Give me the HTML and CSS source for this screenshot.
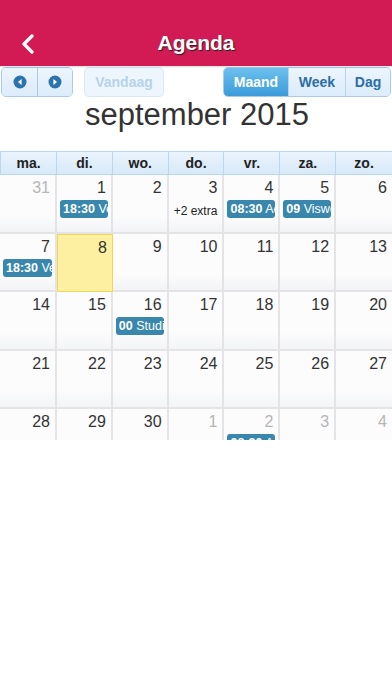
FILE: index.html
```html
<!DOCTYPE html>
<html lang="nl">
<head>
    <meta charset="UTF-8">
    <title>Agenda</title>
    <link rel="stylesheet" href="styles.css">
</head>
<body>
    <div class="app-header">
        <a class="back-btn" href="#">
            <svg width="14" height="20" viewBox="0 0 14 20"><path d="M11 2 L3 10 L11 18" fill="none" stroke="#fff" stroke-width="3.2" stroke-linecap="round" stroke-linejoin="round"/></svg>
        </a>
        <div class="app-title">Agenda</div>
    </div>

    <div class="cal-toolbar">
        <div class="btn-group">
            <span class="cal-btn arrow-btn">
                <svg width="14" height="14" viewBox="0 0 14 14"><circle cx="7" cy="7" r="6.5" fill="#2b74ad"/><path d="M8.6 4 L5 7 L8.6 10 Z" fill="#fff"/></svg>
            </span>
            <span class="cal-btn arrow-btn">
                <svg width="14" height="14" viewBox="0 0 14 14"><circle cx="7" cy="7" r="6.5" fill="#2b74ad"/><path d="M5.4 4 L9 7 L5.4 10 Z" fill="#fff"/></svg>
            </span>
        </div>
        <span class="cal-btn today-btn">Vandaag</span>
        <div class="toolbar-spacer"></div>
        <div class="btn-group">
            <span class="cal-btn view-btn active">Maand</span>
            <span class="cal-btn view-btn">Week</span>
            <span class="cal-btn view-btn">Dag</span>
        </div>
    </div>

    <h2 class="cal-title">september 2015</h2>

    <div class="cal-grid">
        <div class="cal-head">ma.</div>
        <div class="cal-head">di.</div>
        <div class="cal-head">wo.</div>
        <div class="cal-head">do.</div>
        <div class="cal-head">vr.</div>
        <div class="cal-head">za.</div>
        <div class="cal-head">zo.</div>

        <div class="cal-day other"><div class="day-num">31</div></div>
        <div class="cal-day"><div class="day-num">1</div><div class="cal-event"><b>18:30</b> Vergadering</div></div>
        <div class="cal-day"><div class="day-num">2</div></div>
        <div class="cal-day"><div class="day-num">3</div><div class="more-link">+2 extra</div></div>
        <div class="cal-day"><div class="day-num">4</div><div class="cal-event"><b>08:30</b> Activiteit</div></div>
        <div class="cal-day"><div class="day-num">5</div><div class="cal-event"><b>09</b> Visweekend</div></div>
        <div class="cal-day"><div class="day-num">6</div></div>

        <div class="cal-day"><div class="day-num">7</div><div class="cal-event"><b>18:30</b> Vergadering</div></div>
        <div class="cal-day today"><div class="day-num">8</div></div>
        <div class="cal-day"><div class="day-num">9</div></div>
        <div class="cal-day"><div class="day-num">10</div></div>
        <div class="cal-day"><div class="day-num">11</div></div>
        <div class="cal-day"><div class="day-num">12</div></div>
        <div class="cal-day"><div class="day-num">13</div></div>

        <div class="cal-day"><div class="day-num">14</div></div>
        <div class="cal-day"><div class="day-num">15</div></div>
        <div class="cal-day"><div class="day-num">16</div><div class="cal-event"><b>00</b> Studiedag</div></div>
        <div class="cal-day"><div class="day-num">17</div></div>
        <div class="cal-day"><div class="day-num">18</div></div>
        <div class="cal-day"><div class="day-num">19</div></div>
        <div class="cal-day"><div class="day-num">20</div></div>

        <div class="cal-day"><div class="day-num">21</div></div>
        <div class="cal-day"><div class="day-num">22</div></div>
        <div class="cal-day"><div class="day-num">23</div></div>
        <div class="cal-day"><div class="day-num">24</div></div>
        <div class="cal-day"><div class="day-num">25</div></div>
        <div class="cal-day"><div class="day-num">26</div></div>
        <div class="cal-day"><div class="day-num">27</div></div>

        <div class="cal-day"><div class="day-num">28</div></div>
        <div class="cal-day"><div class="day-num">29</div></div>
        <div class="cal-day"><div class="day-num">30</div></div>
        <div class="cal-day other"><div class="day-num">1</div></div>
        <div class="cal-day other"><div class="day-num">2</div><div class="cal-event"><b>08:30</b> Activiteit</div></div>
        <div class="cal-day other"><div class="day-num">3</div></div>
        <div class="cal-day other"><div class="day-num">4</div></div>
    </div>
</body>
</html>
```

FILE: styles.css
```css
* {
    margin: 0;
    padding: 0;
    box-sizing: border-box;
}
body {
    font-family: "Liberation Sans", Arial, sans-serif;
    background: #fff;
    color: #333;
    width: 392px;
}
.app-header {
    height: 66px;
    background: #d21b54;
    display: flex;
    align-items: flex-end;
    padding-bottom: 12px;
    position: relative;
    box-shadow: 0 1px 2px rgba(0, 0, 0, 0.15);
}
.back-btn {
    display: block;
    width: 14px;
    height: 20px;
    margin-left: 21px;
}
.app-title {
    flex: 1;
    text-align: center;
    color: #fff;
    font-size: 21px;
    font-weight: bold;
    line-height: 22px;
    margin-right: 35px;
    text-shadow: 1px 1px 1px #222;
}
.cal-toolbar {
    display: flex;
    align-items: center;
    padding: 1px 1px 0 1px;
    height: 31px;
}
.toolbar-spacer {
    flex: 1;
}
.btn-group {
    display: flex;
    border: 1px solid #a9cbe8;
    border-radius: 5px;
    overflow: hidden;
}
.cal-btn {
    display: flex;
    align-items: center;
    justify-content: center;
    height: 28px;
    font-size: 14px;
    font-weight: bold;
    color: #2a6ea6;
    background: linear-gradient(#ecf5fd, #dcecfa);
}
.arrow-btn {
    width: 35px;
}
.arrow-btn + .arrow-btn {
    border-left: 1px solid #a9cbe8;
}
.today-btn {
    margin-left: 11px;
    width: 80px;
    height: 30px;
    border: 1px solid #d9e9f6;
    border-radius: 5px;
    color: #b6d3ea;
    background: #eef6fd;
}
.view-btn {
    padding: 0 8px;
}
.view-btn + .view-btn {
    border-left: 1px solid #b7d6ef;
}
.view-btn.active {
    color: #fff;
    background: linear-gradient(#6cc0ee, #3b9bd9);
    width: 64px;
}
.view-btn:nth-child(2) {
    width: 57px;
}
.view-btn:nth-child(3) {
    width: 45px;
}
.cal-title {
    font-size: 31px;
    font-weight: normal;
    text-align: center;
    color: #333;
    line-height: 36px;
    height: 54px;
    margin-left: 2px;
}
.cal-grid {
    display: grid;
    grid-template-columns: 57px repeat(6, 1fr);
    grid-auto-rows: 58.5px;
    grid-template-rows: 23px;
    height: 289px;
    overflow: hidden;
    border-top: 1px solid #b9d7f0;
}
.cal-head {
    background: linear-gradient(#eaf4fd, #d8e9f8);
    border-right: 1px solid #b9d7f0;
    border-bottom: 1px solid #b9d7f0;
    text-align: center;
    font-size: 14px;
    font-weight: bold;
    color: #222;
    line-height: 22px;
}
.cal-head:first-child {
    border-left: 1px solid #b9d7f0;
}
.cal-head:nth-child(7) {
    border-right: 0;
}
.cal-day {
    background: linear-gradient(#fcfcfd 70%, #f3f4f6);
    border-right: 2px solid #e4e4e6;
    border-bottom: 2px solid #e4e4e6;
    padding: 3px 3px 0 3px;
    overflow: hidden;
}
.cal-day:nth-child(7n) {
    border-right: 0;
}
.cal-day.today {
    background: #fdf1a1;
    border: 1px solid #f1d65a;
}
.day-num {
    text-align: right;
    font-size: 16px;
    line-height: 20px;
    color: #333;
    padding-right: 2px;
}
.cal-day.other .day-num {
    color: #b5b5b5;
}
.cal-event {
    margin-top: 2px;
    height: 18px;
    background: #3a87ad;
    border-radius: 3px;
    color: #fff;
    font-size: 12.5px;
    line-height: 18px;
    padding-left: 3px;
    white-space: nowrap;
    overflow: hidden;
}
.more-link {
    margin-top: 5px;
    font-size: 12px;
    line-height: 16px;
    color: #222;
    padding-left: 2px;
    white-space: nowrap;
}
```
